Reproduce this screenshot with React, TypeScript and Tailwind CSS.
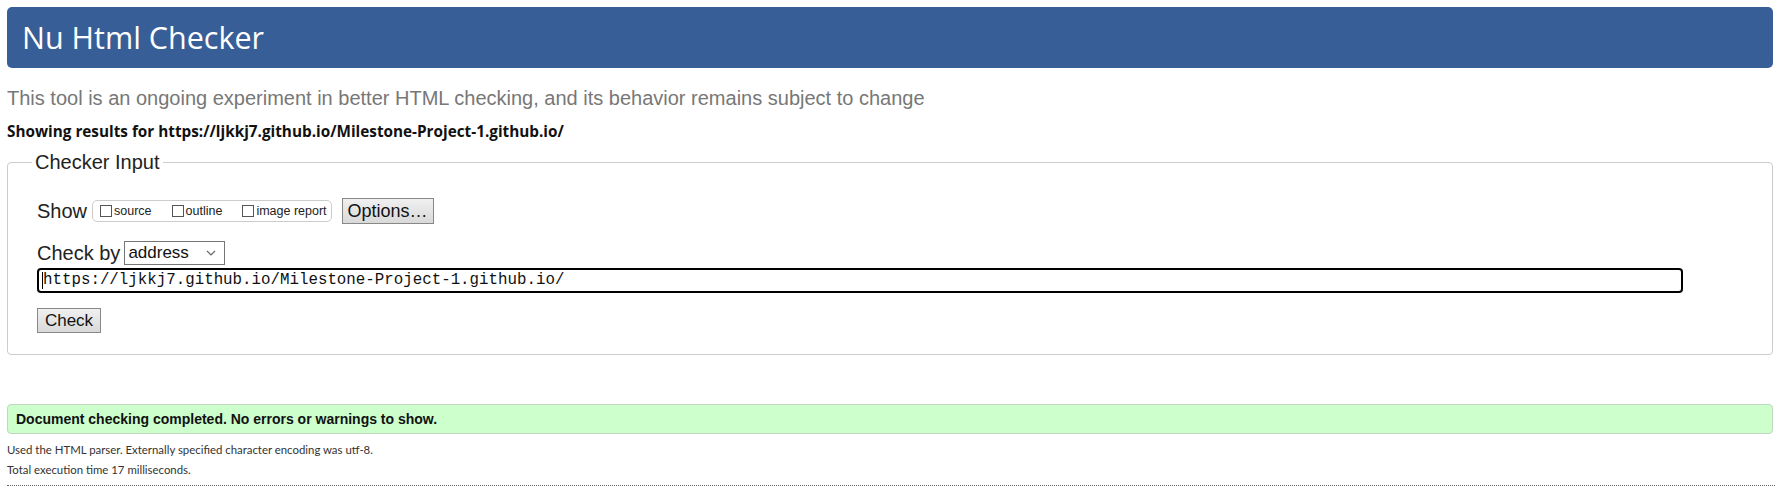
import React from 'react';

function Box({ label }: { label: string }) {
  return (
    <label className="flex items-center">
      <span className="w-[12px] h-[12px] border border-[#555] bg-white" />
      <span className="ml-[2px] text-[12.5px] text-[#222]">{label}</span>
    </label>
  );
}

export default function App() {
  return (
    <div className="w-[1782px] h-[493px] overflow-hidden bg-white text-black font-['Liberation_Sans',Arial,sans-serif]">
      {/* Header */}
      <div className="mx-[7px] mt-[7px] w-[1766px] h-[61px] rounded-[5px] bg-[#385e97] flex items-center pl-[15px]">
        <h1 className="text-white text-[30.5px] font-['Open_Sans',sans-serif] leading-none">Nu Html Checker</h1>
      </div>

      <p className="mt-[19px] px-[7px] text-[20px] leading-[23px] text-[#777]">
        This tool is an ongoing experiment in better HTML checking, and its behavior remains subject to change
      </p>

      <p className="mt-[12px] px-[7px] text-[15.3px] leading-[18px] font-bold font-['Open_Sans',sans-serif] text-[#111]">
        Showing results for https://ljkkj7.github.io/Milestone-Project-1.github.io/
      </p>

      {/* Checker input */}
      <fieldset className="mt-[11px] mx-[7px] w-[1766px] border border-[#ccc] rounded-[4px] pl-[24px] pb-[21px]">
        <legend className="px-[3px] text-[20px] leading-[23px] text-[#222]">Checker Input</legend>
        <div className="pl-[5px]">
          <div className="mt-[24px] flex items-center h-[26px]">
            <span className="text-[20px] text-[#222]">Show</span>
            <div className="ml-[5px] h-[22px] border border-[#ccc] rounded-[5px] flex items-center pl-[7px] pr-[4px] gap-[20px]">
              <Box label="source" />
              <Box label="outline" />
              <Box label="image report" />
            </div>
            <button className="ml-[10px] w-[92px] h-[26px] border border-[#888] bg-gradient-to-b from-[#f0f0f0] to-[#d9d9d9] text-[18px] text-[#111] flex items-center justify-center">
              Options…
            </button>
          </div>

          <div className="mt-[17px] flex items-center h-[24px]">
            <span className="text-[20px] text-[#222]">Check by</span>
            <div className="ml-[4px] w-[101px] h-[24px] border border-[#767676] flex items-center justify-between pl-[3px] pr-[8px]">
              <span className="text-[17px] text-[#111]">address</span>
              <svg width="10" height="6" viewBox="0 0 10 6" fill="none" stroke="#666" strokeWidth="1.2">
                <path d="M1 1l4 4 4-4" />
              </svg>
            </div>
          </div>

          <div className="mt-[3px] w-[1646px] h-[25px] border-2 border-black rounded-[4px] flex items-center pl-[3px]">
            <span className="w-[1px] h-[17px] bg-black" />
            <span className="text-[15.8px] font-['Liberation_Mono',monospace] text-[#111]">https://ljkkj7.github.io/Milestone-Project-1.github.io/</span>
          </div>

          <button className="mt-[15px] w-[64px] h-[25px] border border-[#888] bg-gradient-to-b from-[#f0f0f0] to-[#d9d9d9] text-[17px] text-[#111] flex items-center justify-center">
            Check
          </button>
        </div>
      </fieldset>

      {/* Result */}
      <div className="mt-[49px] mx-[7px] w-[1766px] h-[30px] rounded-[4px] bg-[#ccffcc] border border-[#c0d6c0] flex items-center pl-[8px]">
        <span className="text-[14px] font-bold text-[#111]">Document checking completed. No errors or warnings to show.</span>
      </div>

      <div className="mt-[6px] pb-[5px] border-b border-dotted border-[#666] mx-[7px] text-[11.4px] leading-[20px] font-['Lato',sans-serif] text-[#333]">
        <p>Used the HTML parser. Externally specified character encoding was utf-8.</p>
        <p>Total execution time 17 milliseconds.</p>
      </div>
    </div>
  );
}
